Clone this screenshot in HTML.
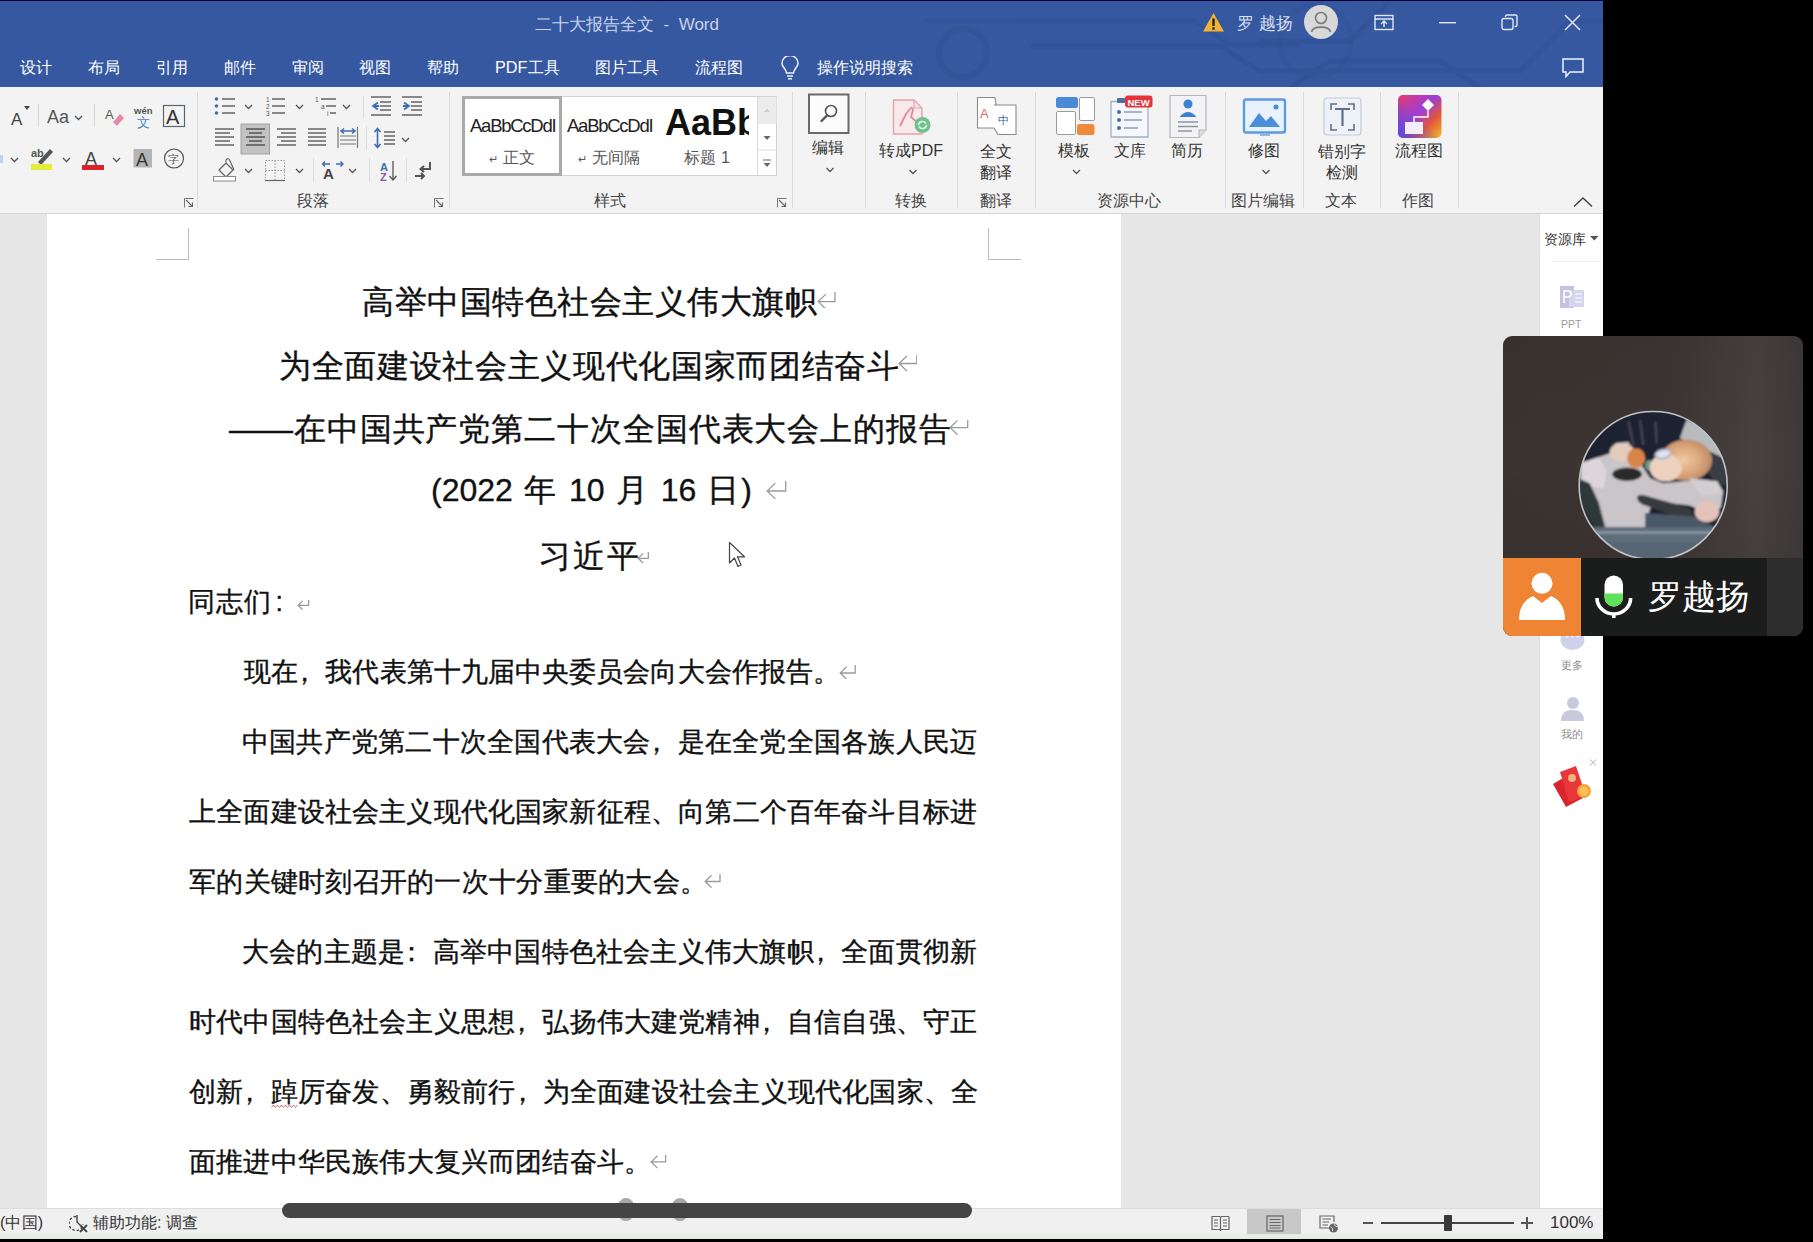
<!DOCTYPE html>
<html><head><meta charset="utf-8">
<style>
*{margin:0;padding:0;box-sizing:border-box}
html,body{width:1813px;height:1242px;overflow:hidden;background:#000;font-family:"Liberation Sans",sans-serif}
.a{position:absolute}
#win{position:absolute;left:0;top:0;width:1603px;height:1239px;background:#e6e6e6;overflow:hidden}
#blue{position:absolute;left:0;top:0;width:1603px;height:87px;background:#3658a0;border-top:1px solid #000030}
.tt{color:#fff;font-size:16.2px;white-space:nowrap}
#ribbon{position:absolute;left:0;top:87px;width:1603px;height:127px;background:#f3f3f3;border-bottom:1px solid #d6d6d6}
.sep{position:absolute;top:8px;width:1px;height:112px;background:#d8d8d8}
.gl{position:absolute;top:104px;font-size:16px;color:#444;white-space:nowrap}
.rl{position:absolute;font-size:16px;color:#333;white-space:nowrap;text-align:center}
#page{position:absolute;left:47px;top:214px;width:1074px;height:994px;background:#fff}
.doc{position:absolute;color:#111;white-space:nowrap;-webkit-text-stroke:0.35px #111}
.t1{font-size:32px;line-height:40px}
.b1{font-size:27px;line-height:34px}
.pc{position:relative;left:-7px}
.ret{color:#9a9a9a;font-size:22px}
#side{position:absolute;left:1539px;top:214px;width:64px;height:994px;background:#fff;border-left:1px solid #e0e0e0}
#status{position:absolute;left:0;top:1208px;width:1603px;height:26px;background:#f0f0f0;border-top:1px solid #dcdcdc}
#grn{position:absolute;left:0;top:1234px;width:1603px;height:5px;background:#e3efe6}
</style></head><body>
<div id="win">
  <div id="blue">
    <svg class="a" style="left:0;top:0" width="1603" height="87" viewBox="0 0 1603 87">
      <g fill="none" stroke="#2f4f96" stroke-width="5" opacity="0.5">
        <path d="M925 20 H1195 L1230 44 H1300"></path>
        <path d="M1030 45 H1220 L1260 70 H1520 L1570 20 H1603"></path>
        <path d="M1290 87 L1330 60 H1440 L1480 87"></path>
        <path d="M1390 0 L1350 40 H1260"></path>
      </g>
      <circle cx="963" cy="52" r="24" fill="none" stroke="#2f4f96" stroke-width="6" opacity="0.5"></circle>
      <circle cx="1315" cy="40" r="36" fill="none" stroke="#2f4f96" stroke-width="5" opacity="0.35"></circle>
    </svg>
    <div class="a tt" style="left: 535px; top: 12px; font-size: 17px; color: rgb(201, 211, 234); width: 184px; text-align: justify; text-align-last: justify;">二十大报告全文 &nbsp;- &nbsp;Word</div>
    <svg class="a" style="left:1202px;top:10px" width="23" height="22" viewBox="0 0 23 22"><path d="M11.5 2 L22 20.5 H1 Z" fill="#f2b233"></path><rect x="10.3" y="7.5" width="2.4" height="7.5" fill="#222"></rect><rect x="10.3" y="16.3" width="2.4" height="2.4" fill="#222"></rect></svg>
    <div class="a tt" style="left: 1237px; top: 11px; font-size: 17px; color: rgb(214, 221, 238); width: 56px; text-align: justify; text-align-last: justify;">罗 越扬</div>
    <svg class="a" style="left:1304px;top:4px" width="34" height="34" viewBox="0 0 34 34"><circle cx="17" cy="17" r="17" fill="#d8d8d8"></circle><circle cx="17" cy="13" r="5.5" fill="none" stroke="#7a7a7a" stroke-width="1.6"></circle><path d="M7.5 27 C9 20.5 25 20.5 26.5 27" fill="none" stroke="#7a7a7a" stroke-width="1.6"></path></svg>
    <svg class="a" style="left:1374px;top:13px" width="20" height="17" viewBox="0 0 20 17" fill="none" stroke="#e0e6f3" stroke-width="1.4"><rect x="1" y="1.5" width="18" height="14"></rect><path d="M1 5 H19 M10 13 V7.5 M7 10 L10 7 L13 10"></path></svg>
    <svg class="a" style="left:1439px;top:20px" width="17" height="3" viewBox="0 0 17 3"><rect x="0" y="1" width="17" height="1.4" fill="#e0e6f3"></rect></svg>
    <svg class="a" style="left:1501px;top:13px" width="17" height="17" viewBox="0 0 17 17" fill="none" stroke="#e0e6f3" stroke-width="1.4"><rect x="1" y="4.5" width="11" height="11" rx="2"></rect><path d="M4.5 3 V2.5 Q4.5 1 6 1 H14.5 Q16 1 16 2.5 V11 Q16 12.5 14.5 12.5 H13.5"></path></svg>
    <svg class="a" style="left:1564px;top:13px" width="17" height="17" viewBox="0 0 17 17" stroke="#e0e6f3" stroke-width="1.5"><path d="M1 1 L16 16 M16 1 L1 16"></path></svg>
    <div class="a tt" style="left: 20px; top: 56px; width: 32px; text-align: justify; text-align-last: justify;">设计</div>
    <div class="a tt" style="left: 88px; top: 56px; width: 32px; text-align: justify; text-align-last: justify;">布局</div>
    <div class="a tt" style="left: 156px; top: 56px; width: 32px; text-align: justify; text-align-last: justify;">引用</div>
    <div class="a tt" style="left: 224px; top: 56px; width: 32px; text-align: justify; text-align-last: justify;">邮件</div>
    <div class="a tt" style="left: 292px; top: 56px; width: 32px; text-align: justify; text-align-last: justify;">审阅</div>
    <div class="a tt" style="left: 359px; top: 56px; width: 32px; text-align: justify; text-align-last: justify;">视图</div>
    <div class="a tt" style="left: 427px; top: 56px; width: 32px; text-align: justify; text-align-last: justify;">帮助</div>
    <div class="a tt" style="left: 495px; top: 56px; width: 65px; text-align: justify; text-align-last: justify;">PDF工具</div>
    <div class="a tt" style="left: 595px; top: 56px; width: 64px; text-align: justify; text-align-last: justify;">图片工具</div>
    <div class="a tt" style="left: 695px; top: 56px; width: 48px; text-align: justify; text-align-last: justify;">流程图</div>
    <svg class="a" style="left:780px;top:55px" width="20" height="24" viewBox="0 0 20 24" fill="none" stroke="#eef2fa" stroke-width="1.5"><path d="M6.5 17 C6.5 13 2 11 2 7.5 A8 8 0 0 1 18 7.5 C18 11 13.5 13 13.5 17 Z"></path><path d="M7 20 H13 M8 22.8 H12"></path></svg>
    <div class="a tt" style="left: 817px; top: 56px; width: 96px; text-align: justify; text-align-last: justify;">操作说明搜索</div>
    <svg class="a" style="left:1562px;top:57px" width="22" height="20" viewBox="0 0 22 20" fill="none" stroke="#eef2fa" stroke-width="1.5"><path d="M1 1 H21 V14 H8 L4 18.5 V14 H1 Z"></path></svg>
  </div>
  <div id="ribbon"></div>
  <div class="a" style="left:0;top:0;width:1603px;height:213px">
    <!-- group separators -->
    <div class="a" style="left:197px;top:92px;width:1px;height:116px;background:#dadada"></div>
    <div class="a" style="left:449px;top:92px;width:1px;height:116px;background:#dadada"></div>
    <div class="a" style="left:792px;top:92px;width:1px;height:116px;background:#dadada"></div>
    <div class="a" style="left:865px;top:92px;width:1px;height:116px;background:#dadada"></div>
    <div class="a" style="left:957px;top:92px;width:1px;height:116px;background:#dadada"></div>
    <div class="a" style="left:1035px;top:92px;width:1px;height:116px;background:#dadada"></div>
    <div class="a" style="left:1225px;top:92px;width:1px;height:116px;background:#dadada"></div>
    <div class="a" style="left:1303px;top:92px;width:1px;height:116px;background:#dadada"></div>
    <div class="a" style="left:1380px;top:92px;width:1px;height:116px;background:#dadada"></div>
    <div class="a" style="left:1458px;top:92px;width:1px;height:116px;background:#dadada"></div>
    <!-- small separators -->
    <div class="a" style="left:38px;top:104px;width:1px;height:23px;background:#d6d6d6"></div>
    <div class="a" style="left:94px;top:104px;width:1px;height:23px;background:#d6d6d6"></div>
    <div class="a" style="left:363px;top:96px;width:1px;height:22px;background:#dcdcdc"></div>
    <div class="a" style="left:366px;top:126px;width:1px;height:24px;background:#dcdcdc"></div>
    <div class="a" style="left:313px;top:158px;width:1px;height:24px;background:#dcdcdc"></div>
    <div class="a" style="left:369px;top:158px;width:1px;height:24px;background:#dcdcdc"></div>
    <div class="a" style="left:406px;top:158px;width:1px;height:24px;background:#dcdcdc"></div>
    <svg class="a" style="left:0;top:87px" width="1603" height="125" viewBox="0 87 1603 125">
      <defs>
        <path id="car" d="M0 0 L3.5 3.5 L7 0" fill="none" stroke="#555" stroke-width="1.3"></path>
        <g id="lch"><path d="M0.5 9.5 V0.5 H9.5" fill="none" stroke="#777" stroke-width="1"></path><path d="M2 2 L8.5 8.5 M4.5 8.5 H8.5 V4.5" fill="none" stroke="#666" stroke-width="1.1"></path></g>
      </defs>
      <!-- font group row1 -->
      <text x="11" y="125" font-family="Liberation Sans" font-size="17" fill="#444">A</text>
      <path d="M24 106 H30 L27 110 Z" fill="#444"></path>
      <text x="47" y="123" font-family="Liberation Sans" font-size="18" fill="#555">Aa</text>
      <use href="#car" x="75" y="116"></use>
      <text x="105" y="119" font-family="Liberation Sans" font-size="13" fill="#555">A</text>
      <path d="M113 122 L120 114 L124 118 L117 126 Z" fill="#e38aa8"></path>
      <text x="134" y="114" font-family="Liberation Sans" font-size="9.5" font-weight="bold" fill="#555">wén</text>
      <text x="137" y="127" font-size="13" fill="#4b83c8">文</text>
      <rect x="163.5" y="105.5" width="21" height="21" fill="none" stroke="#5a6470" stroke-width="1.2"></rect>
      <text x="166" y="124" font-family="Liberation Sans" font-size="20" fill="#333">A</text>
      <!-- font group row2 -->
      <rect x="0" y="155" width="3" height="8" fill="#b9d3f0"></rect>
      <use href="#car" x="11" y="158"></use>
      <text x="31" y="157" font-family="Liberation Sans" font-size="11" font-weight="bold" fill="#555">ab</text>
      <path d="M38 162 L50 149 L53 152 L41 165 Z" fill="#555"></path>
      <rect x="31" y="164" width="21" height="6" fill="#e2ef3a"></rect>
      <use href="#car" x="63" y="158"></use>
      <text x="85" y="165" font-family="Liberation Sans" font-size="18" fill="#444">A</text>
      <rect x="82" y="165" width="22" height="5" fill="#d9242b"></rect>
      <use href="#car" x="113" y="158"></use>
      <rect x="133.5" y="149" width="18.5" height="18.5" fill="#b4b4b4"></rect>
      <text x="136" y="166" font-family="Liberation Sans" font-size="18" fill="#333">A</text>
      <circle cx="174" cy="158.5" r="9.5" fill="none" stroke="#555" stroke-width="1.2"></circle>
      <text x="168" y="163" font-size="11" fill="#555">字</text>
      <use href="#lch" x="184" y="198"></use>
      <!-- paragraph row1 -->
      <g fill="#4a6fa5"><circle cx="216.5" cy="99" r="1.8"></circle><circle cx="216.5" cy="106" r="1.8"></circle><circle cx="216.5" cy="113" r="1.8"></circle></g>
      <path d="M222 99 H235 M222 106 H235 M222 113 H235" stroke="#666" stroke-width="1.4"></path>
      <use href="#car" x="245" y="105"></use>
      <text x="266" y="102" font-family="Liberation Sans" font-size="6.5" fill="#555">1</text>
      <text x="266" y="109" font-family="Liberation Sans" font-size="6.5" fill="#555">2</text>
      <text x="266" y="116" font-family="Liberation Sans" font-size="6.5" fill="#555">3</text>
      <path d="M272 99 H285 M272 106 H285 M272 113 H285" stroke="#666" stroke-width="1.4"></path>
      <use href="#car" x="296" y="105"></use>
      <text x="315" y="102" font-family="Liberation Sans" font-size="6.5" fill="#555">1</text>
      <text x="321" y="109" font-family="Liberation Sans" font-size="6.5" fill="#555">a</text>
      <text x="327" y="116" font-family="Liberation Sans" font-size="6.5" fill="#555">i</text>
      <path d="M321 99 H336 M326 106 H336 M330 113 H336" stroke="#666" stroke-width="1.4"></path>
      <use href="#car" x="343" y="105"></use>
      <path d="M371 97 H391 M380 102 H391 M380 106 H391 M380 110 H391 M371 115 H391" stroke="#666" stroke-width="1.3"></path>
      <path d="M378 102.5 L373 106 L378 109.5 M373 106 H379" stroke="#3f6db3" stroke-width="1.8" fill="none"></path>
      <path d="M402 97 H422 M411 102 H422 M411 106 H422 M411 110 H422 M402 115 H422" stroke="#666" stroke-width="1.3"></path>
      <path d="M404 102.5 L409 106 L404 109.5 M403 106 H409" stroke="#3f6db3" stroke-width="1.8" fill="none"></path>
      <!-- row2 -->
      <path d="M215 129 H234 M215 133 H230 M215 137 H234 M215 141 H230 M215 145 H234" stroke="#666" stroke-width="1.3"></path>
      <rect x="241" y="124" width="28.5" height="30" fill="#c2c2c2" stroke="#a4a4a4" stroke-width="1"></rect>
      <path d="M246 129 H265 M249 133 H262 M246 137 H265 M249 141 H262 M246 145 H265" stroke="#555" stroke-width="1.3"></path>
      <path d="M277 129 H296 M281 133 H296 M277 137 H296 M281 141 H296 M277 145 H296" stroke="#666" stroke-width="1.3"></path>
      <path d="M308 129 H326 M308 133 H326 M308 137 H326 M308 141 H326 M308 145 H326" stroke="#666" stroke-width="1.3"></path>
      <path d="M338 127 V148 M357.5 127 V148 M340 136 H356 M340 140 H356 M340 144 H356" stroke="#777" stroke-width="1.2"></path>
      <path d="M341 131 H355 M344 128.5 L341 131 L344 133.5 M352 128.5 L355 131 L352 133.5" stroke="#3f6db3" stroke-width="1.5" fill="none"></path>
      <path d="M377.5 129 V147 M374.5 132 L377.5 128.5 L380.5 132 M374.5 144 L377.5 147.5 L380.5 144" stroke="#3f6db3" stroke-width="1.6" fill="none"></path>
      <path d="M384 132 H395 M384 136 H395 M384 140 H395 M384 144 H395" stroke="#666" stroke-width="1.3"></path>
      <use href="#car" x="402" y="138"></use>
      <!-- row3 -->
      <path d="M219 170 L226 163 L233 170 L226 177 Z" fill="none" stroke="#666" stroke-width="1.3"></path>
      <path d="M226 162 V160 Q228 157 230 161 L234 170" fill="none" stroke="#666" stroke-width="1.2"></path>
      <rect x="213.5" y="176.5" width="22" height="4.5" fill="#fff" stroke="#888" stroke-width="1"></rect>
      <use href="#car" x="245" y="169"></use>
      <path d="M265.5 160.5 H284.5 V180.5 H265.5 Z M275 160.5 V180.5 M265.5 170.5 H284.5" fill="none" stroke="#999" stroke-width="1" stroke-dasharray="1.5 1.5"></path>
      <path d="M265 180.5 H285" stroke="#666" stroke-width="1.2"></path>
      <use href="#car" x="296" y="169"></use>
      <text x="323" y="179" font-family="Liberation Sans" font-size="15" font-weight="bold" fill="#444">A</text>
      <path d="M323 164 H330 M325 161.5 L322.5 164 L325 166.5 M336 164 H343 M340.5 161.5 L343 164 L340.5 166.5" stroke="#3f6db3" stroke-width="1.4" fill="none"></path>
      <use href="#car" x="349" y="169"></use>
      <text x="380" y="171" font-family="Liberation Sans" font-size="11" font-weight="bold" fill="#3f6db3">A</text>
      <text x="380" y="181" font-family="Liberation Sans" font-size="11" font-weight="bold" fill="#8a5aa6">Z</text>
      <path d="M393 161 V180 M389.5 176 L393 180 L396.5 176" stroke="#555" stroke-width="1.3" fill="none"></path>
      <path d="M430 162 V169 H421 M424 166 L420.5 169 L424 172" stroke="#555" stroke-width="2" fill="none"></path>
      <path d="M415 176 H424 M421 173 L424 176 L421 179" stroke="#555" stroke-width="2" fill="none"></path>
      <use href="#lch" x="434" y="198"></use>
      <!-- styles gallery -->
      <rect x="462.5" y="96.5" width="314" height="79" fill="#fff" stroke="#d2d2d2"></rect>
      <rect x="463.5" y="97.5" width="97" height="77" fill="#fff" stroke="#a9a9a9" stroke-width="3"></rect>
      <path d="M757.5 96.5 V175.5 M757.5 123 H776.5 M757.5 150 H776.5" stroke="#dadada"></path>
      <rect x="758" y="97" width="18.5" height="26" fill="#ececec"></rect>
      <path d="M764 112 L767 108.5 L770 112 Z" fill="#cfcfcf"></path>
      <path d="M763.5 136 L767 140 L770.5 136 Z" fill="#666"></path>
      <path d="M763 160 H771" stroke="#666" stroke-width="1"></path>
      <path d="M763.5 163 L767 167 L770.5 163 Z" fill="#666"></path>
      <use href="#lch" x="777" y="198"></use>
      <!-- edit -->
      <rect x="809" y="94.5" width="39.5" height="38.5" fill="#fcfcfc" stroke="#6a6a6a" stroke-width="2"></rect>
      <circle cx="831" cy="111" r="5.5" fill="none" stroke="#555" stroke-width="1.6"></circle>
      <path d="M827 115.5 L821.5 121" stroke="#555" stroke-width="2.4" stroke-linecap="round"></path>
      <use href="#car" x="826.5" y="168"></use>
      <!-- pdf -->
      <path d="M893.5 100 H914 L922 108 V134 H893.5 Z" fill="#f9e9ec" stroke="#e3a2ae" stroke-width="1.4"></path>
      <path d="M914 100 V108 H922" fill="none" stroke="#e3a2ae" stroke-width="1.2"></path>
      <path d="M900 126 L906 114 L910 109 Q912 106 913 110 L911 117 L919 124" fill="none" stroke="#e08a9a" stroke-width="1.8"></path>
      <circle cx="922.5" cy="125" r="8" fill="#6cc48a"></circle>
      <path d="M918.5 125 A4 4 0 0 1 926 123.5 M926.5 125 A4 4 0 0 1 919 126.5" fill="none" stroke="#fff" stroke-width="1.4"></path>
      <use href="#car" x="909.5" y="170"></use>
      <!-- translate -->
      <path d="M977.5 97.5 H995 L1000 128 H977.5 Z" fill="#fff" stroke="#8a8a8a" stroke-width="1.1"></path>
      <text x="980" y="118" font-family="Liberation Sans" font-size="13" fill="#e06b6b">A</text>
      <path d="M994 105 H1016 V134.5 H998 L994 128" fill="#fff" stroke="#8a8a8a" stroke-width="1.1"></path>
      <text x="998" y="124" font-size="11" fill="#3a5fa8">中</text>
      <!-- templates -->
      <rect x="1056" y="97" width="22" height="11" rx="2.5" fill="#4a89d6"></rect>
      <rect x="1079.5" y="97.5" width="15" height="23" rx="1.5" fill="#fff" stroke="#9a9a9a"></rect>
      <rect x="1056.5" y="111.5" width="19" height="23" rx="1.5" fill="#fff" stroke="#9a9a9a"></rect>
      <rect x="1077" y="124" width="17.5" height="11" rx="2.5" fill="#ef8a3a"></rect>
      <use href="#car" x="1073" y="170"></use>
      <!-- wenku -->
      <path d="M1111 101.5 H1148 V137 H1111 Z" fill="#f4f7fb" stroke="#9fb0c6" stroke-width="1.3"></path>
      <rect x="1117" y="98" width="8" height="5" rx="1" fill="#4a6fa5"></rect>
      <g fill="#4a6fa5"><circle cx="1119" cy="112" r="2"></circle><circle cx="1119" cy="120" r="2"></circle><circle cx="1119" cy="128" r="2"></circle></g>
      <path d="M1124 112 H1142 M1124 120 H1142 M1124 128 H1138" stroke="#8ca0bb" stroke-width="1.5"></path>
      <rect x="1125" y="95.5" width="27.5" height="12" rx="3" fill="#e5323b"></rect>
      <text x="1127.5" y="105.5" font-family="Liberation Sans" font-size="9.5" font-weight="bold" fill="#fff">NEW</text>
      <!-- resume -->
      <path d="M1170 95.5 H1206 V130 L1199 137.5 H1170 Z" fill="#f3f3f5" stroke="#b5b5bb" stroke-width="1.2"></path>
      <path d="M1199 137.5 V130 H1206" fill="#ddd" stroke="#b5b5bb" stroke-width="1.1"></path>
      <circle cx="1188" cy="104" r="4.5" fill="#3b82d4"></circle>
      <path d="M1179.5 117 Q1188 107 1196.5 117 Z" fill="#3b82d4"></path>
      <path d="M1178 122 H1198 M1178 126.5 H1198 M1178 131 H1192" stroke="#8d95a5" stroke-width="1.3"></path>
      <!-- picture edit -->
      <rect x="1244" y="99.5" width="41" height="33" rx="2" fill="#e9f1fb" stroke="#5b9be0" stroke-width="2.4"></rect>
      <path d="M1249 127 L1259 113 L1266 121 L1271 116 L1280 127 Z" fill="#4a8fdc"></path>
      <circle cx="1276" cy="107" r="2.5" fill="#4a8fdc"></circle>
      <path d="M1260 135 H1270" stroke="#8fb8e8" stroke-width="2"></path>
      <use href="#car" x="1262.5" y="170"></use>
      <!-- typo check -->
      <rect x="1324" y="98" width="37" height="37" rx="3" fill="#eef2f8" stroke="#c4ccd8" stroke-width="1.2"></rect>
      <path d="M1331 110 V104 H1337 M1348 104 H1354 V110 M1354 124 V130 H1348 M1337 130 H1331 V124" fill="none" stroke="#607088" stroke-width="1.6"></path>
      <path d="M1335 109 H1350 M1342.5 109 V126" stroke="#607088" stroke-width="2.2"></path>
      <!-- flowchart -->
      <defs>
        <linearGradient id="fg" x1="0" y1="0" x2="1" y2="1"><stop offset="0" stop-color="#e53a6f"></stop><stop offset="0.45" stop-color="#9d3ed8"></stop><stop offset="0.7" stop-color="#e2573b"></stop><stop offset="1" stop-color="#f1c12c"></stop></linearGradient>
        <linearGradient id="fg2" x1="0" y1="1" x2="1" y2="0"><stop offset="0" stop-color="#4c4de0" stop-opacity="0.9"></stop><stop offset="0.5" stop-color="#4c4de0" stop-opacity="0"></stop></linearGradient>
      </defs>
      <rect x="1398" y="95" width="43.5" height="43" rx="5" fill="url(#fg)"></rect>
      <rect x="1398" y="95" width="43.5" height="43" rx="5" fill="url(#fg2)"></rect>
      <path d="M1428 99 L1434 105 L1428 111 L1422 105 Z" fill="#fff"></path>
      <path d="M1428 111 V117 H1414 V124" fill="none" stroke="#fff" stroke-width="1.4"></path>
      <rect x="1405" y="122" width="18" height="12" fill="#fff" opacity="0.9"></rect>
      <!-- collapse -->
      <path d="M1574 206.5 L1583 198 L1592 206.5" fill="none" stroke="#444" stroke-width="1.5"></path>
    </svg>
    <div class="rl" style="left: 812px; top: 138px; width: 32px; text-align: justify; text-align-last: justify;">编辑</div>
    <div class="rl" style="left: 879px; top: 141px; width: 64px; text-align: justify; text-align-last: justify;">转成PDF</div>
    <div class="rl" style="left: 980px; top: 141px; line-height: 21px; width: 32px; text-align: center; text-align-last: center;">全文<br>翻译</div>
    <div class="rl" style="left: 1058px; top: 141px; width: 32px; text-align: justify; text-align-last: justify;">模板</div>
    <div class="rl" style="left: 1114px; top: 141px; width: 32px; text-align: justify; text-align-last: justify;">文库</div>
    <div class="rl" style="left: 1171px; top: 141px; width: 32px; text-align: justify; text-align-last: justify;">简历</div>
    <div class="rl" style="left: 1248px; top: 141px; width: 32px; text-align: justify; text-align-last: justify;">修图</div>
    <div class="rl" style="left: 1318px; top: 141px; line-height: 21px; width: 48px; text-align: center; text-align-last: center;">错别字<br>检测</div>
    <div class="rl" style="left: 1395px; top: 141px; width: 48px; text-align: justify; text-align-last: justify;">流程图</div>
    <div class="gl" style="left: 297px; top: 191px; width: 32px; text-align: justify; text-align-last: justify;">段落</div>
    <div class="gl" style="left: 594px; top: 191px; width: 32px; text-align: justify; text-align-last: justify;">样式</div>
    <div class="gl" style="left: 895px; top: 191px; width: 32px; text-align: justify; text-align-last: justify;">转换</div>
    <div class="gl" style="left: 980px; top: 191px; width: 32px; text-align: justify; text-align-last: justify;">翻译</div>
    <div class="gl" style="left: 1097px; top: 191px; width: 64px; text-align: justify; text-align-last: justify;">资源中心</div>
    <div class="gl" style="left: 1231px; top: 191px; width: 64px; text-align: justify; text-align-last: justify;">图片编辑</div>
    <div class="gl" style="left: 1325px; top: 191px; width: 32px; text-align: justify; text-align-last: justify;">文本</div>
    <div class="gl" style="left: 1402px; top: 191px; width: 32px; text-align: justify; text-align-last: justify;">作图</div>
    <div class="a" style="left:470px;top:115px;font-size:18.5px;letter-spacing:-1.25px;color:#222;white-space:nowrap">AaBbCcDdI</div>
    <div class="a" style="left:567px;top:115px;font-size:18.5px;letter-spacing:-1.25px;color:#222;white-space:nowrap">AaBbCcDdI</div>
    <div class="a" style="left:665px;top:102px;width:84px;overflow:hidden;font-size:36px;font-weight:bold;color:#111;white-space:nowrap">AaBb</div>
    <div class="a" style="left: 489px; top: 148px; font-size: 16px; color: rgb(85, 85, 85); white-space: nowrap; width: 46px; text-align: justify; text-align-last: justify;"><span style="font-size:11px">↵</span> 正文</div>
    <div class="a" style="left: 578px; top: 148px; font-size: 16px; color: rgb(85, 85, 85); white-space: nowrap; width: 62px; text-align: justify; text-align-last: justify;"><span style="font-size:11px">↵</span> 无间隔</div>
    <div class="a" style="left: 684px; top: 148px; font-size: 16px; color: rgb(85, 85, 85); white-space: nowrap; width: 46px; text-align: justify; text-align-last: justify;">标题 1</div>
  </div>

  <div id="page">
    <div class="a" style="left:109px;top:14px;width:33px;height:32px;border-right:1px solid #bbb;border-bottom:1px solid #bbb"></div>
    <div class="a" style="left:941px;top:14px;width:33px;height:32px;border-left:1px solid #bbb;border-bottom:1px solid #bbb"></div>
  </div>
  <div class="doc t1" style="left: 362px; top: 282px; width: 455px; text-align: justify; text-align-last: justify;">高举中国特色社会主义伟大旗帜</div>
  <div class="doc t1" style="left: 279px; top: 346px; width: 620px; text-align: justify; text-align-last: justify;">为全面建设社会主义现代化国家而团结奋斗</div>
  <div class="doc t1" style="left: 229px; top: 409px; width: 722px; text-align: justify; text-align-last: justify;">——在中国共产党第二十次全国代表大会上的报告</div>
  <div class="doc t1" style="left: 431px; top: 470px; width: 321px; text-align: justify; text-align-last: justify;">(2022 年 10 月 16 日)</div>
  <div class="doc t1" style="left: 539px; top: 536px; width: 100px; text-align: justify; text-align-last: justify;">习近平</div>
  <svg class="a" style="left:817.0px;top:290.6px" width="19.0" height="17.8"><path d="M18.0 1 V10.6 H1.2 M8.9 3.1 L1.2 10.6 L8.9 18.1" fill="none" stroke="#9a9a9a" stroke-width="1.3"></path></svg>
  <svg class="a" style="left:897.6px;top:354.3px" width="19.8" height="17.7"><path d="M18.8 1 V9.5 H1.2 M8.8 2.0 L1.2 9.5 L8.8 17.0" fill="none" stroke="#9a9a9a" stroke-width="1.3"></path></svg>
  <svg class="a" style="left:949.0px;top:418.6px" width="19.7" height="17.1"><path d="M18.7 1 V8.6 H1.2 M8.5 1.4 L1.2 8.6 L8.5 15.8" fill="none" stroke="#9a9a9a" stroke-width="1.3"></path></svg>
  <svg class="a" style="left:766.0px;top:480.0px" width="20.7" height="18.7"><path d="M19.7 1 V11.0 H1.2 M9.3 3.1 L1.2 11.0 L9.3 18.9" fill="none" stroke="#9a9a9a" stroke-width="1.3"></path></svg>
  <svg class="a" style="left:637.2px;top:551.2px" width="12.3" height="12.3"><path d="M11.3 1 V7.3 H1.2 M6.1 2.4 L1.2 7.3 L6.1 12.2" fill="none" stroke="#9a9a9a" stroke-width="1.3"></path></svg>
  <svg class="a" style="left:297.1px;top:599.2px" width="12.6" height="11.3"><path d="M11.6 1 V6.3 H1.2 M5.6 1.9 L1.2 6.3 L5.6 10.7" fill="none" stroke="#9a9a9a" stroke-width="1.3"></path></svg>
  <svg class="a" style="left:839.4px;top:663.6px" width="17.2" height="15.5"><path d="M16.2 1 V9.0 H1.2 M7.7 2.6 L1.2 9.0 L7.7 15.4" fill="none" stroke="#9a9a9a" stroke-width="1.3"></path></svg>
  <svg class="a" style="left:704.0px;top:873.0px" width="17.0" height="15.0"><path d="M16.0 1 V8.5 H1.2 M7.5 2.3 L1.2 8.5 L7.5 14.7" fill="none" stroke="#9a9a9a" stroke-width="1.3"></path></svg>
  <svg class="a" style="left:650.0px;top:1153.6px" width="16.6" height="15.0"><path d="M15.6 1 V7.9 H1.2 M7.5 1.7 L1.2 7.9 L7.5 14.1" fill="none" stroke="#9a9a9a" stroke-width="1.3"></path></svg>
  <svg class="a" style="left:271px;top:1103px" width="28" height="7" viewBox="0 0 28 7"><path d="M0.5 4.5 L2.5 2 L4.5 4.5 L6.5 2 L8.5 4.5 L10.5 2 L12.5 4.5 L14.5 2 L16.5 4.5 L18.5 2 L20.5 4.5 L22.5 2 L24.5 4.5 L26.5 2" fill="none" stroke="#d4707f" stroke-width="1"></path></svg>
  <div class="doc b1" style="left: 188px; top: 585px; width: 95px; text-align: justify; text-align-last: justify;">同志们<span style="font-family:'Liberation Sans';margin-left:3px">:</span></div>
  <div class="doc b1" style="left: 244px; top: 655px; width: 596px; text-align: justify; text-align-last: justify;">现在<span class="pc">，</span>我代表第十九届中央委员会向大会作报告。</div>
  <div class="doc b1" style="left: 242px; top: 725px; width: 735px; text-align: justify; text-align-last: justify;">中国共产党第二十次全国代表大会<span class="pc">，</span>是在全党全国各族人民迈</div>
  <div class="doc b1" style="left: 189px; top: 795px; width: 788px; text-align: justify; text-align-last: justify;">上全面建设社会主义现代化国家新征程、向第二个百年奋斗目标进</div>
  <div class="doc b1" style="left: 189px; top: 865px; width: 518px; text-align: justify; text-align-last: justify;">军的关键时刻召开的一次十分重要的大会。</div>
  <div class="doc b1" style="left: 242px; top: 935px; width: 735px; text-align: justify; text-align-last: justify;">大会的主题是<span class="pc">：</span>高举中国特色社会主义伟大旗帜<span class="pc">，</span>全面贯彻新</div>
  <div class="doc b1" style="left: 189px; top: 1005px; width: 788px; text-align: justify; text-align-last: justify;">时代中国特色社会主义思想<span class="pc">，</span>弘扬伟大建党精神<span class="pc">，</span>自信自强、守正</div>
  <div class="doc b1" style="left: 189px; top: 1075px; width: 789px; text-align: justify; text-align-last: justify;">创新<span class="pc">，</span>踔厉奋发、勇毅前行<span class="pc">，</span>为全面建设社会主义现代化国家、全</div>
  <div class="doc b1" style="left: 189px; top: 1145px; width: 462px; text-align: justify; text-align-last: justify;">面推进中华民族伟大复兴而团结奋斗。</div>
  <div id="side">
    <div class="a" style="left: 4px; top: 17px; font-size: 14px; color: rgb(51, 51, 51); white-space: nowrap; width: 42px; text-align: justify; text-align-last: justify;">资源库</div>
    <svg class="a" style="left:50px;top:22px" width="9" height="5" viewBox="0 0 9 5"><path d="M0 0 H8.5 L4.25 4.5 Z" fill="#555"></path></svg>
    <div class="a" style="left:12px;top:47px;width:49px;height:1px;background:#ececec"></div>
    <svg class="a" style="left:20px;top:72px" width="25" height="24" viewBox="0 0 25 24"><rect x="0" y="0" width="14" height="22" fill="#c5c3e4"></rect><rect x="9" y="4" width="15" height="17" fill="#d6d5ee"></rect><path d="M4 17 V5 H8 Q11 5 11 8 Q11 11 8 11 H4" fill="none" stroke="#fff" stroke-width="1.6"></path><path d="M15 8 H22 M15 12 H22 M15 16 H22" stroke="#fff" stroke-width="1.2"></path></svg>
    <div class="a" style="left:21px;top:104px;font-size:10.5px;color:#9a9a9a">PPT</div>
    <svg class="a" style="left:20px;top:420px" width="25" height="20" viewBox="0 0 25 20"><ellipse cx="12.5" cy="6" rx="12" ry="10" fill="#cfd0ea"></ellipse><circle cx="7" cy="2" r="1.6" fill="#fff"></circle><circle cx="12.5" cy="2" r="1.6" fill="#fff"></circle><circle cx="18" cy="2" r="1.6" fill="#fff"></circle></svg>
    <div class="a" style="left: 21px; top: 444px; font-size: 11px; color: rgb(138, 138, 138); white-space: nowrap; width: 22px; text-align: justify; text-align-last: justify;">更多</div>
    <svg class="a" style="left:20px;top:482px" width="25" height="27" viewBox="0 0 25 27"><circle cx="13" cy="7" r="6" fill="#c9c9dd"></circle><path d="M1 25 Q1 14 12.5 14 Q24 14 24 25 Z" fill="#c9c9dd"></path></svg>
    <div class="a" style="left: 21px; top: 513px; font-size: 11px; color: rgb(138, 138, 138); white-space: nowrap; width: 22px; text-align: justify; text-align-last: justify;">我的</div>
    <svg class="a" style="left:49px;top:545px" width="8" height="7" viewBox="0 0 8 7"><path d="M1 0.5 L7 6.5 M7 0.5 L1 6.5" stroke="#aaa" stroke-width="1"></path></svg>
    <svg class="a" style="left:10px;top:550px" width="43" height="44" viewBox="0 0 43 44"><path d="M3 20 L20 10 L33 34 L16 43 Z" fill="#d8262c"></path><path d="M10 8 L26 2 L36 32 L19 38 Z" fill="#e8373a"></path><circle cx="22" cy="14" r="4" fill="#f6b27a"></circle><circle cx="34" cy="27" r="7" fill="#f3a43a"></circle><circle cx="34" cy="27" r="4.5" fill="#f8c15a"></circle></svg>
  </div>
  <div id="status">
    <div class="a" style="left: 0px; top: 4px; font-size: 16px; color: rgb(51, 51, 51); white-space: nowrap; width: 43px; text-align: justify; text-align-last: justify;">(中国)</div>
    <svg class="a" style="left:69px;top:5px" width="20" height="19" viewBox="0 0 20 19" fill="none" stroke="#444" stroke-width="1.4"><path d="M7 2.5 A7 7 0 1 0 14 10" stroke-dasharray="2.5 2"></path><path d="M8 1 V8 L11 11"></path><path d="M11 11 L18 18 M18 11 L11 18" stroke-width="1.8"></path></svg>
    <div class="a" style="left: 93px; top: 4px; font-size: 16px; color: rgb(51, 51, 51); white-space: nowrap; width: 105px; text-align: justify; text-align-last: justify;">辅助功能: 调查</div>
    <svg class="a" style="left:1211px;top:6px" width="19" height="17" viewBox="0 0 19 17" fill="none" stroke="#666" stroke-width="1.2"><path d="M1 1.5 H8.5 Q9.5 1.5 9.5 3 V16 Q9.5 14.5 8.5 14.5 H1 Z M18 1.5 H10.5 Q9.5 1.5 9.5 3 M18 1.5 V14.5 H10.5 Q9.5 14.5 9.5 16"></path><path d="M3 5 H7 M3 8 H7 M3 11 H7 M12 5 H16 M12 8 H16 M12 11 H16" stroke-width="1"></path></svg>
    <div class="a" style="left:1247px;top:0;width:54px;height:30px;background:#c8c8c8"></div>
    <svg class="a" style="left:1266px;top:6px" width="18" height="17" viewBox="0 0 18 17" fill="none" stroke="#666" stroke-width="1.2"><rect x="1" y="1" width="16" height="15"></rect><path d="M3.5 4.5 H14.5 M3.5 7.5 H14.5 M3.5 10.5 H14.5 M3.5 13 H14.5" stroke-width="1"></path></svg>
    <svg class="a" style="left:1319px;top:6px" width="20" height="18" viewBox="0 0 20 18" fill="none" stroke="#666" stroke-width="1.2"><path d="M13 13 H1 V1 H15 V7"></path><path d="M3.5 4 H12 M3.5 7 H10 M3.5 10 H9" stroke-width="1"></path><circle cx="14.5" cy="13" r="4.5" fill="#666" stroke="none"></circle><path d="M12 11.5 Q14 13 13.5 16 M15 9 Q16 12 19 12" stroke="#ddd" stroke-width="1"></path></svg>
    <div class="a" style="left:1363px;top:13px;width:10px;height:1.5px;background:#555"></div>
    <div class="a" style="left:1381px;top:13px;width:133px;height:2px;background:#444"></div>
    <div class="a" style="left:1444px;top:6px;width:8px;height:16px;background:#3a3a3a;border-radius:1px"></div>
    <div class="a" style="left:1521px;top:13px;width:12px;height:1.5px;background:#555"></div>
    <div class="a" style="left:1526.3px;top:8px;width:1.5px;height:12px;background:#555"></div>
    <div class="a" style="left:1550px;top:4px;font-size:17px;color:#333;white-space:nowrap">100%</div>
  </div>
  <div id="grn"></div>
</div>
<!-- scroll overlay -->
<div class="a" style="left:617px;top:1198px;width:18px;height:23px;border-radius:50%;background:#a9a9a9"></div>
<div class="a" style="left:671px;top:1198px;width:18px;height:23px;border-radius:50%;background:#a9a9a9"></div>
<div class="a" style="left:282px;top:1203px;width:690px;height:15px;border-radius:8px;background:#444"></div>
<!-- cursor -->
<svg class="a" style="left:728px;top:541px" width="19" height="28" viewBox="0 0 19 28"><path d="M1.5 1.5 V22 L6.5 17 L10 25.5 L13 24 L9.5 15.8 H16.5 Z" fill="#fff" stroke="#444" stroke-width="1.2" stroke-linejoin="round"></path></svg>
<!-- video overlay -->
<div class="a" style="left:1503px;top:336px;width:300px;height:300px;border-radius:9px;background:linear-gradient(90deg,#3a3330 0%,#3d3533 55%,#47413f 85%,#3e3a39 100%);overflow:hidden">
  <div class="a" style="left:0;top:0;width:300px;height:300px;background:linear-gradient(180deg,rgba(0,0,0,0.05),rgba(0,0,0,0) 40%,rgba(0,0,0,0.08))"></div>
  <svg class="a" style="left:70px;top:70px" width="160" height="160" viewBox="1573 406 160 160">
    <defs><filter id="bl" x="-5%" y="-5%" width="110%" height="110%"><feGaussianBlur stdDeviation="1.1"></feGaussianBlur></filter><clipPath id="cc"><circle cx="1653.2" cy="485.5" r="74.5"></circle></clipPath>
    <radialGradient id="hair" cx="0.45" cy="0.5" r="0.55"><stop offset="0" stop-color="#efc9a4"></stop><stop offset="0.6" stop-color="#dca57a"></stop><stop offset="1" stop-color="#b98a6a"></stop></radialGradient></defs>
    <g clip-path="url(#cc)"><g filter="url(#bl)"><g transform="translate(1573 406) scale(0.128824)">
      <rect x="0" y="0" width="1242" height="1242" fill="#1f2330"></rect>
      <path d="M430 120 L470 300 M520 110 L545 300 M640 120 L650 290" stroke="#4a4d58" stroke-width="14"></path>
      <path d="M880 110 L1120 190 L1200 420 L1010 330 L830 250 Z" fill="#b8bbbe"></path>
      <path d="M930 300 L1180 420 L1200 620 L1100 600 Z" fill="#3b3e45"></path>
      <path d="M60 560 L130 420 L280 370 L330 290 L430 280 L480 380 L600 560 L700 600 L1000 570 L1120 590 L1165 660 L1150 780 L1100 850 L900 770 L700 750 L600 790 L560 940 L180 940 L140 720 L60 650 Z" fill="#c9c5c9"></path>
      <path d="M60 440 L200 400 L260 500 L240 640 L120 620 L60 560 Z" fill="#dcd6da"></path>
      <path d="M40 560 L130 600 L200 750 L250 940 L160 940 L80 800 L40 700 Z" fill="#2e3737"></path>
      <ellipse cx="380" cy="360" rx="95" ry="75" fill="#e3cbbd"></ellipse>
      <ellipse cx="490" cy="405" rx="70" ry="78" fill="#d8844a"></ellipse>
      <ellipse cx="420" cy="530" rx="115" ry="52" fill="#2c2c2c"></ellipse>
      <ellipse cx="590" cy="460" rx="30" ry="40" fill="#6c9f86"></ellipse>
      <ellipse cx="880" cy="420" rx="200" ry="160" fill="url(#hair)"></ellipse>
      <ellipse cx="720" cy="480" rx="125" ry="105" fill="#ecd1bf"></ellipse>
      <ellipse cx="700" cy="372" rx="62" ry="34" fill="#dfe4ec" stroke="#a7b1cb" stroke-width="14" transform="rotate(-12 700 372)"></ellipse>
      <path d="M900 560 L1120 585 L1165 680 L1000 700 Z" fill="#d2ced2"></path>
      <path d="M500 700 Q520 680 580 700 L900 790 L950 860 L880 885 L540 765 Q490 740 500 700 Z" fill="#393a3e"></path>
      <path d="M560 830 L950 860 L1100 940 L560 940 Z" fill="#4a5866"></path>
      <ellipse cx="1040" cy="820" rx="95" ry="80" fill="#e6c3ba"></ellipse>
      <rect x="0" y="940" width="1242" height="302" fill="#5e6d7a"></rect>
      <rect x="0" y="975" width="1242" height="14" fill="#9aa7b1"></rect>
      <rect x="0" y="1060" width="1242" height="182" fill="#566573"></rect>
    </g></g></g>
    <circle cx="1653.2" cy="485.5" r="74" fill="none" stroke="#c0c3c6" stroke-width="1.6"></circle>
  </svg>
  <div class="a" style="left:0;top:222px;width:78px;height:78px;background:#ef8534"></div>
  <svg class="a" style="left:15px;top:236px" width="48" height="50" viewBox="1518 572 48 50"><circle cx="1542" cy="583.3" r="10.5" fill="#fff"></circle><path d="M1519 620 Q1519 602 1533 596 L1542 603 L1551 596 Q1565 602 1565 620 Z" fill="#fff"></path></svg>
  <div class="a" style="left:78px;top:222px;width:186px;height:78px;background:#1b1d1d"></div>
  <div class="a" style="left:264px;top:222px;width:36px;height:78px;background:#2e2d2d"></div>
  <svg class="a" style="left:92px;top:239px" width="38" height="43" viewBox="1595 575 38 43"><defs><clipPath id="mc"><rect x="1604.5" y="575.5" width="18.5" height="31" rx="9.25"></rect></clipPath></defs><rect x="1604.5" y="575.5" width="18.5" height="31" rx="9.25" fill="#fff"></rect><rect x="1604" y="593.5" width="20" height="14" fill="#5fe05a" clip-path="url(#mc)"></rect><path d="M1597 598 A16.8 16 0 0 0 1630.6 598" fill="none" stroke="#fff" stroke-width="3.6"></path><path d="M1613.8 614 V618.5" stroke="#fff" stroke-width="3.6"></path></svg>
  <div class="a" style="left: 145px; top: 240px; font-size: 34px; line-height: 40px; color: rgb(255, 255, 255); white-space: nowrap; width: 102px; text-align: justify; text-align-last: justify;">罗越扬</div>
</div>

</body></html>
